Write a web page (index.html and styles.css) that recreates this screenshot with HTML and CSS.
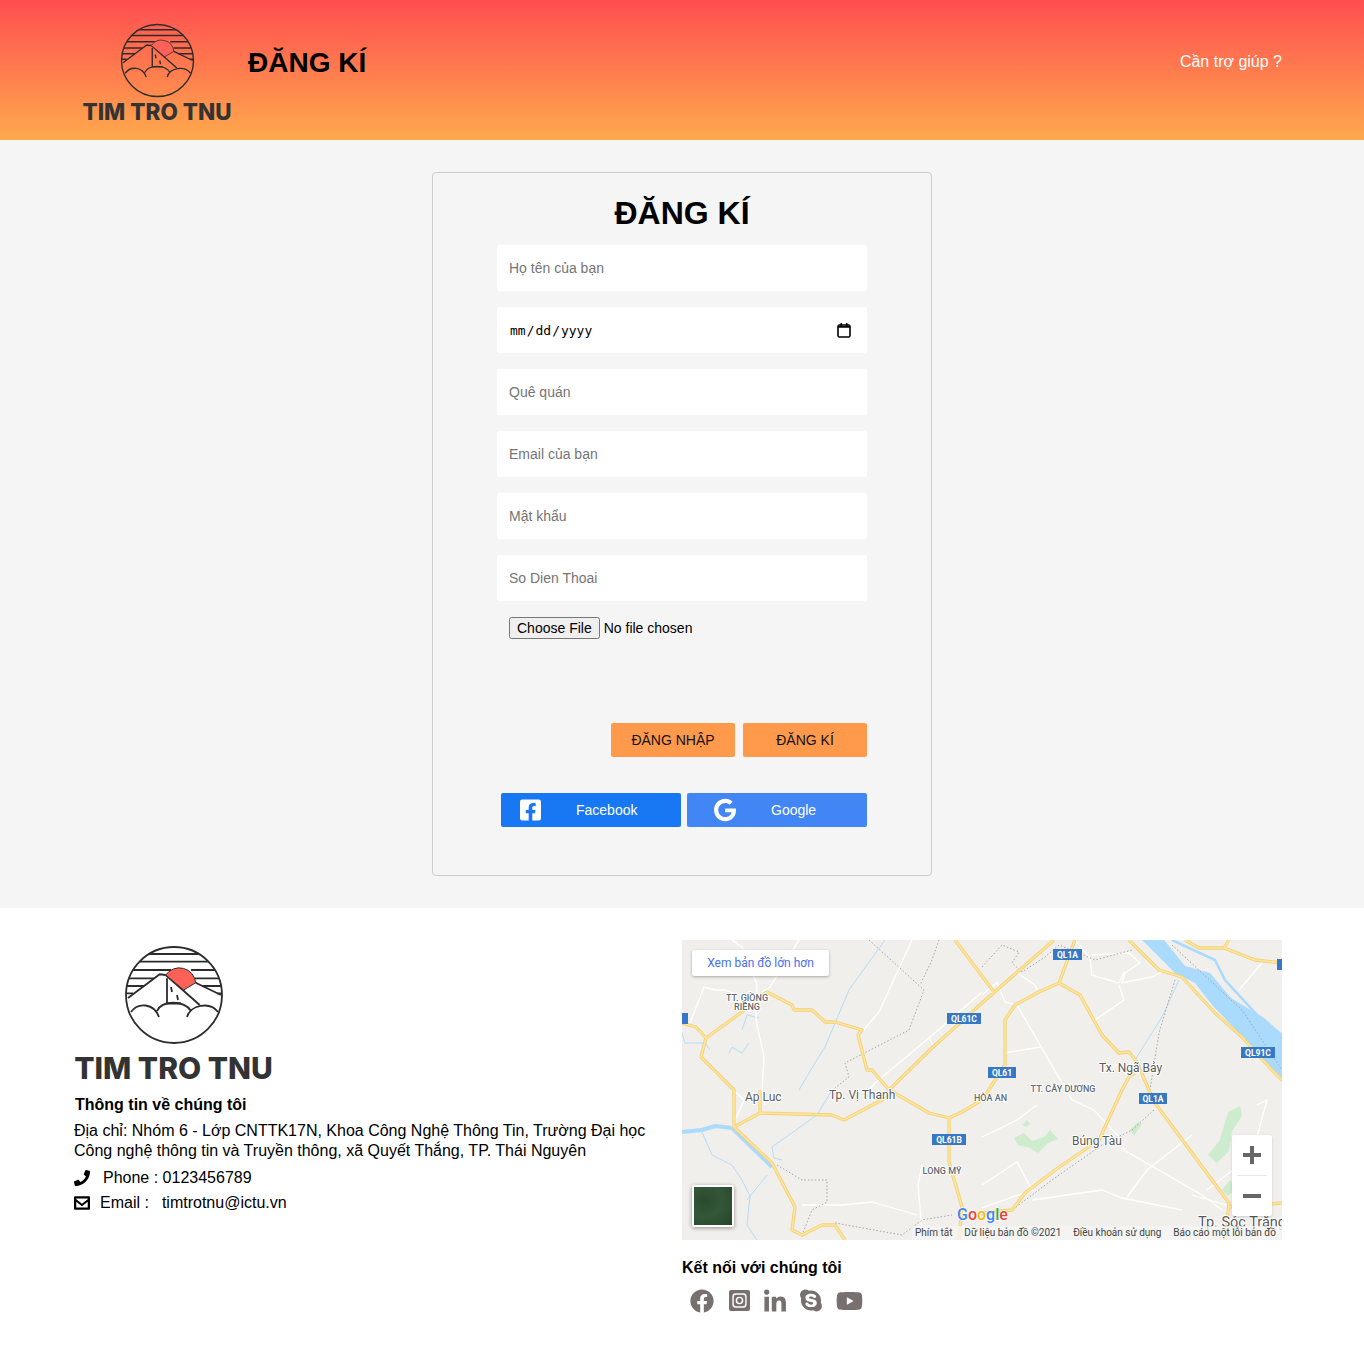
FILE: index.html
```html
<!DOCTYPE html>
<html lang="vi">
<head>
<meta charset="utf-8">
<title>Đăng kí</title>
<link rel="stylesheet" href="styles.css">
</head>
<body>
<svg class="sprite" aria-hidden="true">
  <defs>
    <clipPath id="logo-clip"><circle cx="50" cy="50" r="48"/></clipPath>
    <symbol id="logo-mark" viewBox="0 0 100 100">
      <g class="logo-lines">
        <circle cx="50" cy="50" r="48"/>
        <g clip-path="url(#logo-clip)">
          <path d="M0 9H100M0 16.7H100M0 25H47M67 25H100M0 33.3H30M71 33.3H100M0 41H20M78 41H100M0 48.3H9M93 48.3H100"/>
          <path d="M4 53L35.7 29.3L41.7 30M71.7 37.7L97 50M41.7 30L75.7 60M43 33.3V58.5H57"/>
          <path d="M47 42l1 5M53 50l1 5"/>
          <path d="M7 67C14 57 30 58 35 72M33 66C38 55 60 55 67 66M63 72C66 60 86 56 94 67"/>
        </g>
      </g>
      <path class="logo-sun" d="M41.7 30A16.5 16.5 0 0 1 71.7 37.7L59.7 45Z"/>
    </symbol>
    <symbol id="i-fb-square" viewBox="0 0 448 512"><path d="M400 32H48A48 48 0 0 0 0 80v352a48 48 0 0 0 48 48h137.25V327.69h-63V256h63v-54.64c0-62.15 37-96.48 93.67-96.48 27.14 0 55.52 4.84 55.52 4.84v61h-31.27c-30.81 0-40.42 19.12-40.42 38.73V256h68.78l-11 71.69h-57.78V480H400a48 48 0 0 0 48-48V80a48 48 0 0 0-48-48z"/></symbol>
    <symbol id="i-google" viewBox="0 0 488 512"><path d="M488 261.8C488 403.3 391.1 504 248 504 110.8 504 0 393.2 0 256S110.8 8 248 8c66.8 0 123 24.5 166.3 64.9l-67.5 64.9C258.5 52.6 94.3 116.6 94.3 256c0 86.5 69.1 156.6 153.7 156.6 98.2 0 135-70.4 140.8-106.9H248v-85.3h236.1c2.3 12.7 3.9 24.9 3.9 41.4z"/></symbol>
    <symbol id="i-phone" viewBox="0 0 512 512"><path d="M493.4 24.6l-104-24c-11.3-2.6-22.9 3.3-27.5 13.9l-48 112c-4.2 9.8-1.4 21.3 6.9 28l60.6 49.6c-36 76.7-98.9 140.5-177.2 177.2l-49.6-60.6c-6.8-8.3-18.2-11.1-28-6.9l-112 48C3.9 366.5-2 378.1.6 389.4l24 104C27.1 504.2 36.7 512 48 512c256.1 0 464-207.5 464-464 0-11.2-7.7-20.9-18.6-23.4z"/></symbol>
    <symbol id="i-mail" viewBox="0 0 14 14"><path fill-rule="evenodd" d="M1 1H13A1 1 0 0 1 14 2V12A1 1 0 0 1 13 13H1A1 1 0 0 1 0 12V2A1 1 0 0 1 1 1ZM2 3V3.800L7 7.600L12 3.800V3ZM2 6V11H12V6L7 9.800Z"/></symbol>
    <symbol id="i-fb" viewBox="0 0 512 512"><path d="M504 256C504 119 393 8 256 8S8 119 8 256c0 123.78 90.69 226.38 209.25 245V327.69h-63V256h63v-54.64c0-62.15 37-96.48 93.67-96.48 27.14 0 55.52 4.84 55.52 4.84v61h-31.28c-30.8 0-40.41 19.12-40.41 38.73V256h68.78l-11 71.69h-57.78V501C413.31 482.38 504 379.78 504 256z"/></symbol>
    <symbol id="i-ig" viewBox="0 0 22 22"><path fill-rule="evenodd" d="M2 0H20A2 2 0 0 1 22 2V20A2 2 0 0 1 20 22H2A2 2 0 0 1 0 20V2A2 2 0 0 1 2 0ZM7 3.500A3.500 3.500 0 0 0 3.500 7V15A3.500 3.500 0 0 0 7 18.500H15A3.500 3.500 0 0 0 18.500 15V7A3.500 3.500 0 0 0 15 3.500ZM7.300 5H14.700A2.300 2.300 0 0 1 17 7.300V14.700A2.300 2.300 0 0 1 14.700 17H7.300A2.300 2.300 0 0 1 5 14.700V7.300A2.300 2.300 0 0 1 7.300 5ZM11 7A4 4 0 1 0 11 15A4 4 0 1 0 11 7ZM11 8.500A2.500 2.500 0 1 1 11 13.500A2.500 2.500 0 1 1 11 8.500Z"/></symbol>
    <symbol id="i-in" viewBox="0 0 448 512"><path transform="translate(0 32)" d="M100.28 448H7.4V148.9h92.88zM53.79 108.1C24.09 108.1 0 83.5 0 53.8a53.79 53.79 0 0 1 107.58 0c0 29.7-24.1 54.3-53.79 54.3zM447.9 448h-92.68V302.4c0-34.7-.7-79.2-48.29-79.2-48.29 0-55.69 37.7-55.69 76.7V448h-92.78V148.9h89.08v40.8h1.3c12.4-23.5 42.69-48.3 87.88-48.3 94 0 111.28 61.9 111.28 142.3V448z"/></symbol>
    <symbol id="i-skype" viewBox="0 0 448 512"><path d="M424.7 299.8c2.9-14 4.7-28.9 4.7-43.8 0-113.5-91.9-205.3-205.3-205.3-14.9 0-29.7 1.700-43.800 4.700C161.300 40.700 137.700 32 112 32 50.200 32 0 82.200 0 144c0 25.700 8.700 49.300 23.300 68.200-2.900 14-4.700 28.900-4.700 43.800 0 113.500 91.900 205.300 205.300 205.300 14.900 0 29.700-1.700 43.800-4.700 19 14.600 42.600 23.300 68.200 23.300 61.800 0 112-50.200 112-112 .1-25.600-8.600-49.200-23.200-68.100zm-194.600 91.500c-65.600 0-120.500-29.200-120.500-65 0-16 9-30.600 29.500-30.600 31.200 0 34.100 44.900 88.100 44.900 25.700 0 42.300-11.400 42.300-26.300 0-18.700-16-21.600-42-28-62.500-15.400-117.800-22-117.800-87.200 0-59.200 58.600-81.100 109.100-81.100 55.100 0 110.800 21.900 110.800 55.400 0 16.900-11.400 31.800-30.300 31.800-28.300 0-29.200-33.500-75-33.500-25.700 0-42 7-42 22.500 0 19.800 20.800 21.800 69.100 33 41.400 9.300 90.700 26.800 90.700 77.600 0 59.100-57.100 86.500-112 86.500z"/></symbol>
    <symbol id="i-yt" viewBox="0 0 576 512"><path d="M549.655 124.083c-6.281-23.650-24.787-42.276-48.284-48.597C458.781 64 288 64 288 64S117.220 64 74.629 75.486c-23.497 6.322-42.003 24.947-48.284 48.597-11.412 42.867-11.412 132.305-11.412 132.305s0 89.438 11.412 132.305c6.281 23.650 24.787 41.500 48.284 47.821C117.220 448 288 448 288 448s170.780 0 213.371-11.486c23.497-6.321 42.003-24.171 48.284-47.821 11.412-42.867 11.412-132.305 11.412-132.305s0-89.438-11.412-132.305zm-317.510 213.508V175.185l142.739 81.205-142.739 81.201z"/></symbol>
    <path id="r-main" d="M0 83L14 87L24 98L19 117L52 150L52 187L90 223L113 267L110 290L120 295L140 285L153 285L163 300M24 98L60 72L85 52L110 65L112 70L130 70L143 82L153 82L180 90L176 95L185 130L190 130L207 150L250 108L300 63L372 0M273 0L312 52M207 150L230 163L247 173L267 178L280 172L300 160L323 125V80L333 65L357 52L377 43L393 0M78 150V173L52 187M78 173L150 175L162 180L213 153L207 150M267 178V222L280 267L277 300M377 43L398 55L420 95L437 113L447 112L455 122L467 150L473 163L547 263L543 300M453 133L447 137L440 150L417 200L373 230L343 253L330 270L300 273M447 0L477 30L500 37L533 73L560 97L587 127L600 140M503 0L517 8L542 8L547 0M542 8L573 20L600 23M547 267L600 263"/>
    <path id="r-white" d="M50 0L60 7L72 37L75 45L74 80L82 117L80 150L83 165M117 0L88 47L80 52M8 83L22 47L33 50L43 50L57 55M230 0L197 72L180 92M300 52L247 98L193 143L187 150M247 98L252 106M300 55L315 42L323 62L335 65L380 143L390 160L412 170L440 200L442 210L520 255L540 270M335 33L353 45L355 50M393 0L408 18L410 35L437 43L442 32M410 15L447 13L458 23L443 33L440 43L470 37L480 32M437 45L442 60L413 80M323 113L358 107M557 50L580 23M417 132L440 123M30 130L62 160L50 187M300 197L335 180L355 165M300 245L335 222L350 250L300 268M350 260L420 250L440 258L500 270M445 257L465 230L510 195M510 255L545 265M525 250L570 215L585 160L575 165M120 265L160 265L190 262L235 275M240 225L236 245L240 290"/>
    <path id="r-water" d="M203 0L167 50L143 107L133 123L117 150M60 90L65 75L77 78M47 113L50 107L60 113L67 103M0 93L3 103L23 103L28 110M150 150L135 175L90 207L92 218L100 220M20 192L30 215L50 225L60 240L68 256L65 285L75 300M85 235L65 260M497 40L480 77L453 120"/>
    <path id="r-dash" d="M187 0L242 50L227 90L163 123L167 137L153 148M257 0L250 20L238 45M95 225L120 240L145 240L145 262L130 270L120 295M153 283L220 295L240 280L270 275M300 27L320 5L337 12L330 23L340 32L363 17L377 5L413 20L450 10M493 40L477 93L468 150M472 170L450 190L420 205L370 240L330 270L300 275M490 5L560 70L600 130"/>
    <path id="r-river" d="M0 192L20 190L33 186L50 188L90 227"/>
    <path id="r-channel" d="M490 0L533 20L543 40L577 77L600 95"/>
  </defs>
</svg>

<header class="top">
  <div class="logo logo-small">
    <svg class="logo-mark"><use href="#logo-mark"/></svg>
    <span class="logo-text">TIM TRO TNU</span>
  </div>
  <h2 class="top-title">ĐĂNG KÍ</h2>
  <a class="help" href="#">Cần trợ giúp ?</a>
</header>

<main class="page">
  <form class="card">
    <h1 class="card-title">ĐĂNG KÍ</h1>
    <input class="field" type="text" placeholder="Họ tên của bạn">
    <input class="field field-date" type="date">
    <input class="field" type="text" placeholder="Quê quán">
    <input class="field" type="email" placeholder="Email của bạn">
    <input class="field" type="password" placeholder="Mật khẩu">
    <input class="field" type="text" placeholder="So Dien Thoai">
    <input class="file" type="file">
    <div class="actions">
      <button class="btn" type="button">ĐĂNG NHẬP</button>
      <button class="btn" type="submit">ĐĂNG KÍ</button>
    </div>
    <div class="socials">
      <a class="social social-fb" href="#"><svg class="social-icon fb-icon"><use href="#i-fb-square"/></svg><span>Facebook</span></a>
      <a class="social social-gg" href="#"><svg class="social-icon gg-icon"><use href="#i-google"/></svg><span>Google</span></a>
    </div>
  </form>
</main>

<footer class="foot">
  <section class="foot-left">
    <div class="logo logo-large">
      <svg class="logo-mark"><use href="#logo-mark"/></svg>
      <span class="logo-text">TIM TRO TNU</span>
    </div>
    <h3 class="foot-heading">Thông tin về chúng tôi</h3>
    <p class="address">Địa chỉ: Nhóm 6 - Lớp CNTTK17N, Khoa Công Nghệ Thông Tin, Trường Đại học Công nghệ thông tin và Truyền thông, xã Quyết Thắng, TP. Thái Nguyên</p>
    <p class="contact contact-first"><svg class="contact-icon"><use href="#i-phone"/></svg><span class="contact-phone">Phone : 0123456789</span></p>
    <p class="contact"><svg class="contact-icon"><use href="#i-mail"/></svg><span class="contact-mail">Email :</span><span class="contact-addr">timtrotnu@ictu.vn</span></p>
  </section>
  <section class="foot-right">
    <div class="map">
      <svg class="map-canvas" viewBox="0 0 600 300" role="img" aria-label="Bản đồ">
        <rect width="600" height="300" class="m-land"/>
        <path class="m-green" d="M332 198l10-5 8 8 12-4 6-7 8 9-10 4-10 10-8-5-12-3zM448 190l8-8 4 2-8 12zM526 215l12-15 8-28 12-6 2 10-10 15-3 20-12 12zM540 250l8-10 6 8-8 8zM340 185l5-5 3 4-4 3z"/>
        <path class="m-river" d="M460 0H482L503 26L528 33L549 58L582 78L600 94V140L567 103L531 66L513 43L493 33Z"/>
        <use href="#r-channel" class="m-channel"/>
        <use href="#r-water" class="m-stream"/>
        <use href="#r-river" class="m-river-thin"/>
        <use href="#r-white" class="m-white"/>
        <use href="#r-dash" class="m-dash"/>
        <use href="#r-main" class="m-case"/>
        <use href="#r-main" class="m-road"/>
        <g class="m-label m-label-sm">
          <text x="65" y="61" text-anchor="middle">TT. GIỒNG</text>
          <text x="65" y="70" text-anchor="middle">RIỀNG</text>
          <text x="308.500" y="161" text-anchor="middle">HÒA AN</text>
          <text x="381" y="152" text-anchor="middle">TT. CÂY DƯƠNG</text>
          <text x="260" y="234" text-anchor="middle">LONG MỸ</text>
        </g>
        <g class="m-label m-label-lg">
          <text x="63" y="161">Ap Luc</text>
          <text x="147" y="159">Tp. Vị Thanh</text>
          <text x="417" y="132">Tx. Ngã Bảy</text>
          <text x="390" y="205">Búng Tàu</text>
          <text class="m-label-city" x="516" y="287">Tp. Sóc Trăng</text>
        </g>
        <g class="m-shield">
          <rect x="-24" y="73" width="30" height="11"/>
          <rect x="265" y="73" width="34" height="11"/><text x="282" y="82" text-anchor="middle">QL61C</text>
          <rect x="371" y="9" width="29" height="11"/><text x="385.500" y="18" text-anchor="middle">QL1A</text>
          <rect x="306" y="127" width="28" height="11"/><text x="320" y="136" text-anchor="middle">QL61</text>
          <rect x="559" y="107" width="34" height="11"/><text x="576" y="116" text-anchor="middle">QL91C</text>
          <rect x="457" y="153" width="28" height="11"/><text x="471" y="162" text-anchor="middle">QL1A</text>
          <rect x="250" y="194" width="34" height="11"/><text x="267" y="203" text-anchor="middle">QL61B</text>
          <rect x="595" y="19" width="30" height="11"/>
        </g>
        <text class="m-google" x="275" y="280"><tspan class="g-blue">G</tspan><tspan class="g-red">o</tspan><tspan class="g-yellow">o</tspan><tspan class="g-blue">g</tspan><tspan class="g-green">l</tspan><tspan class="g-red">e</tspan></text>
      </svg>
      <a class="map-link" href="#">Xem bản đồ lớn hơn</a>
      <div class="map-thumb"></div>
      <div class="map-zoom">
        <span class="zoom-btn zoom-plus"></span>
        <span class="zoom-btn zoom-minus"></span>
      </div>
      <div class="map-attr">
        <span>Phím tắt</span><span>Dữ liệu bản đồ ©2021</span><span>Điều khoản sử dụng</span><span>Báo cáo một lỗi bản đồ</span>
      </div>
    </div>
    <h3 class="connect">Kết nối với chúng tôi</h3>
    <div class="connect-icons">
      <svg class="ci ci-fb"><use href="#i-fb"/></svg>
      <svg class="ci ci-ig"><use href="#i-ig"/></svg>
      <svg class="ci ci-in"><use href="#i-in"/></svg>
      <svg class="ci ci-sk"><use href="#i-skype"/></svg>
      <svg class="ci ci-yt"><use href="#i-yt"/></svg>
    </div>
  </section>
</footer>
</body>
</html>
```

FILE: styles.css
```css
* { box-sizing: border-box; }
html, body { margin: 0; padding: 0; }
body { font-family: "Liberation Sans", Arial, sans-serif; font-size: 16px; color: #000; background: #fff; }
h1, h2, h3, p { margin: 0; }
a { text-decoration: none; }
.sprite { display: block; width: 0; height: 0; overflow: hidden; }

.top {
  height: 140px;
  display: flex;
  align-items: center;
  padding: 0 82px 0 83px;
  background: linear-gradient(180deg, #ff4e50 0%, #ffa94d 100%);
}
.top-title { font-size: 28px; line-height: 32px; font-weight: 700; margin: 0 0 14px 17px; }
.help { margin-left: auto; color: #fff; font-size: 16px; margin-bottom: 16px; }

.logo { display: flex; flex-direction: column; align-items: center; flex: none; }
.logo-mark { display: block; }
.logo-text { font-family: Inter, sans-serif; font-weight: 800; color: #333; white-space: nowrap; }
.logo-small { width: 148px; margin-top: 9px; }
.logo-small .logo-mark { width: 75px; height: 75px; }
.logo-small .logo-text { font-size: 22.500px; line-height: 28px; margin-top: 0; }
.logo-large { width: 197px; margin-left: 1px; padding-top: 5px; }
.logo-large .logo-mark { width: 100px; height: 100px; }
.logo-large .logo-text { font-size: 30px; line-height: 38px; margin-top: 4px; }
.logo-lines { fill: none; stroke: #2c2c2c; stroke-width: 1.800; }
.logo-small .logo-lines { stroke: #3a2f2b; }
.logo-sun { fill: #ff6058; stroke: #2c2c2c; stroke-width: 1; }

.page { background: #f5f5f5; padding: 32px 0; height: 768px; }
.card {
  width: 500px;
  height: 704px;
  margin: 0 auto;
  border: 1px solid #ccc;
  border-radius: 4px;
  padding: 20px 64px 0;
}
.card-title { font-size: 32px; line-height: 40px; text-align: center; font-weight: 700; margin-bottom: 12px; }
.field {
  display: block;
  width: 370px;
  height: 46px;
  margin-bottom: 16px;
  padding: 0 12px;
  border: 0;
  border-radius: 2px;
  background: #fff;
  font-family: "Liberation Sans", Arial, sans-serif;
  font-size: 14px;
  outline: none;
}
.field::placeholder { color: #757575; opacity: 1; }
.field-date { font-family: "DejaVu Sans Mono", monospace; font-size: 13px; color: #000; padding: 1px 14px 0 12px; }
.field-date::-webkit-calendar-picker-indicator {
  width: 18px;
  height: 18px;
  margin: -1px 0 0;
  padding: 0;
  opacity: 1;
  background: url("data:image/svg+xml,%3Csvg xmlns='http://www.w3.org/2000/svg' viewBox='0 0 18 18'%3E%3Crect x='3' y='4' width='12' height='12' rx='1.500' fill='none' stroke='%23000' stroke-width='1.600'/%3E%3Cpath d='M3 5h12v1.800H3zM5.500 2h1.500v3H5.500zM11 2h1.500v3H11z' fill='%23000'/%3E%3C/svg%3E") center / 18px 18px no-repeat;
}
.file { display: block; margin-left: 12px; height: 22px; font-family: "Liberation Sans", Arial, sans-serif; font-size: 14px; }
.actions { display: flex; justify-content: flex-end; gap: 8px; margin-top: 84px; }
.btn {
  width: 124px;
  height: 34px;
  border: 0;
  border-radius: 2px;
  background: #ff9a4d;
  color: #111;
  font-family: "Liberation Sans", Arial, sans-serif;
  font-size: 14px;
}
.socials { display: flex; gap: 6px; margin: 36px 0 0 4px; }
.social {
  display: flex;
  align-items: center;
  width: 180px;
  height: 34px;
  border-radius: 2px;
  color: #fff;
  font-size: 14px;
}
.social-fb { background: #1877f2; padding-left: 19px; }
.social-gg { background: #4285f4; padding-left: 27px; }
.social-icon { fill: #fff; display: block; flex: none; }
.fb-icon { width: 21px; height: 24px; margin-right: 35px; }
.gg-icon { width: 22px; height: 24px; margin-right: 35px; }

.foot {
  height: 455px;
  padding: 32px 82px 0 74px;
  display: grid;
  grid-template-columns: 608px 600px;
}
.foot-heading { font-size: 16px; line-height: 20px; font-weight: 700; margin: 8px 0 6px 1px; }
.address { width: 580px; font-size: 16px; line-height: 20px; }
.contact { display: flex; align-items: center; font-size: 16px; line-height: 25px; }
.contact-first { margin-top: 4px; }
.contact-icon { width: 16px; height: 16px; display: block; flex: none; }
.contact-phone { margin-left: 13px; }
.contact-mail { margin-left: 10px; }
.contact-addr { margin-left: 13px; }

.map { position: relative; width: 600px; height: 300px; overflow: hidden; }
.map-canvas { display: block; width: 600px; height: 300px; }
.m-land { fill: #f0efeb; }
.m-green { fill: #cdeccd; }
.m-river { fill: #aadafc; }
.m-channel { fill: none; stroke: #aadafc; stroke-width: 2.500; }
.m-river-thin { fill: none; stroke: #aadafc; stroke-width: 4; }
.m-stream { fill: none; stroke: #b4dcfa; stroke-width: 1; }
.m-white { fill: none; stroke: #fff; stroke-width: 1.300; }
.m-dash { fill: none; stroke: #a5a5a5; stroke-width: 1; stroke-dasharray: 1.500 2; }
.m-case { fill: none; stroke: #f4d078; stroke-width: 3.300; stroke-linejoin: round; }
.m-road { fill: none; stroke: #fde59a; stroke-width: 1.600; stroke-linejoin: round; }
.m-label text { font-family: Roboto, sans-serif; paint-order: stroke; stroke: #fff; stroke-width: 2px; stroke-linejoin: round; }
.m-label-sm text { font-size: 9px; font-weight: 500; fill: #5f6a74; }
.m-label-lg text { font-size: 12px; fill: #5b5b5b; }
.m-label-lg .m-label-city { font-size: 14.500px; }
.m-shield rect { fill: #3778c6; }
.m-shield text { font-family: Roboto, sans-serif; font-size: 8.500px; font-weight: 700; fill: #fff; }
.m-google { font-family: Roboto, sans-serif; font-size: 16px; font-weight: 500; paint-order: stroke; stroke: #fff; stroke-width: 1px; }
.g-blue { fill: #4285f4; }
.g-red { fill: #ea4335; }
.g-yellow { fill: #fbbc05; }
.g-green { fill: #34a853; }

.map-link {
  position: absolute;
  left: 10px;
  top: 10px;
  width: 137px;
  height: 26px;
  background: #fff;
  border-radius: 2px;
  box-shadow: 0 1px 3px rgba(0, 0, 0, .3);
  color: #4a6ff0;
  font-family: Roboto, sans-serif;
  font-size: 12px;
  line-height: 26px;
  text-align: center;
}
.map-thumb {
  position: absolute;
  left: 10px;
  top: 245px;
  width: 42px;
  height: 42px;
  border: 2px solid #fff;
  border-radius: 2px;
  background: radial-gradient(circle at 30% 35%, #2a4a2c 0%, #34573a 45%, #274526 100%);
  box-shadow: 0 1px 4px rgba(0, 0, 0, .4);
}
.map-zoom {
  position: absolute;
  left: 550px;
  top: 195px;
  width: 40px;
  height: 81px;
  background: #fff;
  border-radius: 2px;
  box-shadow: 0 1px 3px rgba(0, 0, 0, .15);
  display: flex;
  flex-direction: column;
  padding: 0 5px;
}
.zoom-btn { position: relative; height: 40px; display: block; }
.zoom-plus { border-bottom: 1px solid #e6e6e6; height: 41px; }
.zoom-btn::before { content: ""; position: absolute; left: 6px; top: 18px; width: 18px; height: 4px; background: #666; }
.zoom-plus::after { content: ""; position: absolute; left: 13px; top: 11px; width: 4px; height: 18px; background: #666; }
.map-attr {
  position: absolute;
  right: 0;
  bottom: 0;
  height: 14px;
  width: 370px;
  display: flex;
  justify-content: space-between;
  padding: 0 6px 0 3px;
  background: rgba(245, 245, 245, .75);
  font-family: Roboto, sans-serif;
  font-size: 10px;
  line-height: 14px;
  color: #444;
}
.connect { font-size: 16px; line-height: 20px; font-weight: 700; margin-top: 18px; }
.connect-icons { display: flex; align-items: center; margin: 10px 0 0 8px; }
.ci { display: block; flex: none; fill: #77706e; }
.ci-fb { width: 24px; height: 24px; margin-right: 15px; }
.ci-ig { width: 21px; height: 21px; margin-right: 14px; }
.ci-in { width: 22px; height: 25px; margin-right: 14px; }
.ci-sk { width: 22px; height: 25px; margin-right: 14px; }
.ci-yt { width: 27px; height: 24px; }
```
